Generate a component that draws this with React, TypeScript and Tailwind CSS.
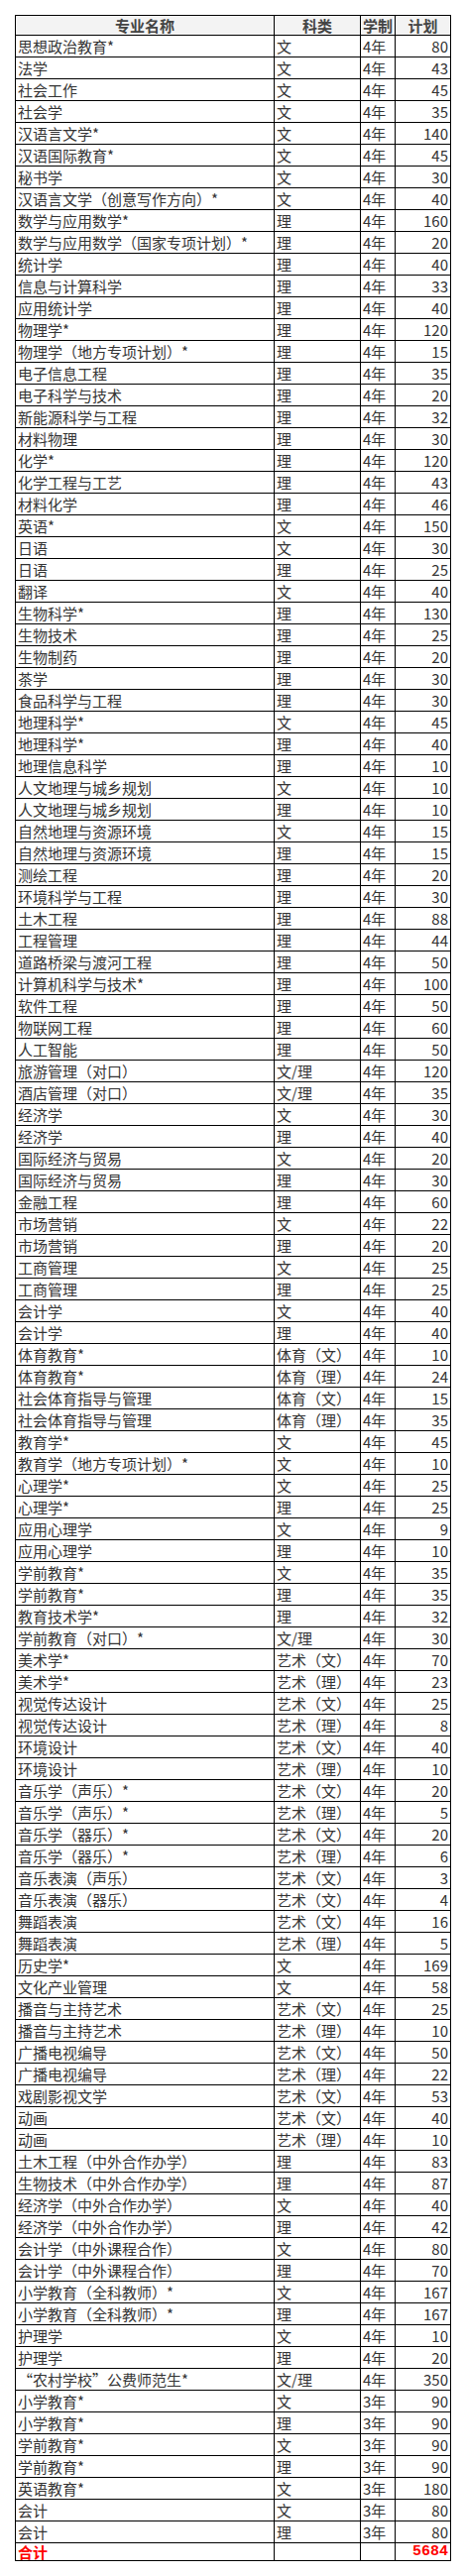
const data = `思想政治教育*|文|4年|80
法学|文|4年|43
社会工作|文|4年|45
社会学|文|4年|35
汉语言文学*|文|4年|140
汉语国际教育*|文|4年|45
秘书学|文|4年|30
汉语言文学（创意写作方向）*|文|4年|40
数学与应用数学*|理|4年|160
数学与应用数学（国家专项计划）*|理|4年|20
统计学|理|4年|40
信息与计算科学|理|4年|33
应用统计学|理|4年|40
物理学*|理|4年|120
物理学（地方专项计划）*|理|4年|15
电子信息工程|理|4年|35
电子科学与技术|理|4年|20
新能源科学与工程|理|4年|32
材料物理|理|4年|30
化学*|理|4年|120
化学工程与工艺|理|4年|43
材料化学|理|4年|46
英语*|文|4年|150
日语|文|4年|30
日语|理|4年|25
翻译|文|4年|40
生物科学*|理|4年|130
生物技术|理|4年|25
生物制药|理|4年|20
茶学|理|4年|30
食品科学与工程|理|4年|30
地理科学*|文|4年|45
地理科学*|理|4年|40
地理信息科学|理|4年|10
人文地理与城乡规划|文|4年|10
人文地理与城乡规划|理|4年|10
自然地理与资源环境|文|4年|15
自然地理与资源环境|理|4年|15
测绘工程|理|4年|20
环境科学与工程|理|4年|30
土木工程|理|4年|88
工程管理|理|4年|44
道路桥梁与渡河工程|理|4年|50
计算机科学与技术*|理|4年|100
软件工程|理|4年|50
物联网工程|理|4年|60
人工智能|理|4年|50
旅游管理（对口）|文/理|4年|120
酒店管理（对口）|文/理|4年|35
经济学|文|4年|30
经济学|理|4年|40
国际经济与贸易|文|4年|20
国际经济与贸易|理|4年|30
金融工程|理|4年|60
市场营销|文|4年|22
市场营销|理|4年|20
工商管理|文|4年|25
工商管理|理|4年|25
会计学|文|4年|40
会计学|理|4年|40
体育教育*|体育（文）|4年|10
体育教育*|体育（理）|4年|24
社会体育指导与管理|体育（文）|4年|15
社会体育指导与管理|体育（理）|4年|35
教育学*|文|4年|45
教育学（地方专项计划）*|文|4年|10
心理学*|文|4年|25
心理学*|理|4年|25
应用心理学|文|4年|9
应用心理学|理|4年|10
学前教育*|文|4年|35
学前教育*|理|4年|35
教育技术学*|理|4年|32
学前教育（对口）*|文/理|4年|30
美术学*|艺术（文）|4年|70
美术学*|艺术（理）|4年|23
视觉传达设计|艺术（文）|4年|25
视觉传达设计|艺术（理）|4年|8
环境设计|艺术（文）|4年|40
环境设计|艺术（理）|4年|10
音乐学（声乐）*|艺术（文）|4年|20
音乐学（声乐）*|艺术（理）|4年|5
音乐学（器乐）*|艺术（文）|4年|20
音乐学（器乐）*|艺术（理）|4年|6
音乐表演（声乐）|艺术（文）|4年|3
音乐表演（器乐）|艺术（文）|4年|4
舞蹈表演|艺术（文）|4年|16
舞蹈表演|艺术（理）|4年|5
历史学*|文|4年|169
文化产业管理|文|4年|58
播音与主持艺术|艺术（文）|4年|25
播音与主持艺术|艺术（理）|4年|10
广播电视编导|艺术（文）|4年|50
广播电视编导|艺术（理）|4年|22
戏剧影视文学|艺术（文）|4年|53
动画|艺术（文）|4年|40
动画|艺术（理）|4年|10
土木工程（中外合作办学）|理|4年|83
生物技术（中外合作办学）|理|4年|87
经济学（中外合作办学）|文|4年|40
经济学（中外合作办学）|理|4年|42
会计学（中外课程合作）|文|4年|80
会计学（中外课程合作）|理|4年|70
小学教育（全科教师）*|文|4年|167
小学教育（全科教师）*|理|4年|167
护理学|文|4年|10
护理学|理|4年|20
“农村学校”公费师范生*|文/理|4年|350
小学教育*|文|3年|90
小学教育*|理|3年|90
学前教育*|文|3年|90
学前教育*|理|3年|90
英语教育*|文|3年|180
会计|文|3年|80
会计|理|3年|80`;

const rows = data.split("\n").map((line) => line.split("|"));

const cell = "border border-black px-[2px] whitespace-nowrap";

export default function App() {
  return (
    <div
      lang="zh-CN"
      className="min-h-[2599px] bg-white pt-[15px] pl-[15px] font-['Noto_Sans_CJK_SC',sans-serif] text-[15px] text-[#333]"
    >
      <table className="table-fixed border-collapse border border-black w-[439px]">
        <colgroup>
          <col className="w-[261px]" />
          <col className="w-[87px]" />
          <col className="w-[35px]" />
          <col className="w-[56px]" />
        </colgroup>
        <thead>
          <tr className="bg-[#f3f3f3] leading-[19px] font-bold text-[#444]">
            <th className={`${cell} text-center`}>专业名称</th>
            <th className={`${cell} text-center`}>科类</th>
            <th className="border border-black px-0 text-center whitespace-nowrap">学制</th>
            <th className={`${cell} text-center`}>计划</th>
          </tr>
        </thead>
        <tbody>
          {rows.map(([name, kind, years, plan], i) => (
            <tr key={i} className="leading-[21px]">
              <td className={`${cell} text-left`}>{name}</td>
              <td className={`${cell} text-left`}>{kind}</td>
              <td className={`${cell} text-left`}>{years}</td>
              <td className={`${cell} text-right`}>{plan}</td>
            </tr>
          ))}
          <tr className="leading-[17px] font-bold text-[#ff0000]">
            <td className={`${cell} text-left`}>合计</td>
            <td className={cell}></td>
            <td className={cell}></td>
            <td className={`${cell} text-right font-['Liberation_Mono',monospace]`}>5684</td>
          </tr>
        </tbody>
      </table>
    </div>
  );
}
